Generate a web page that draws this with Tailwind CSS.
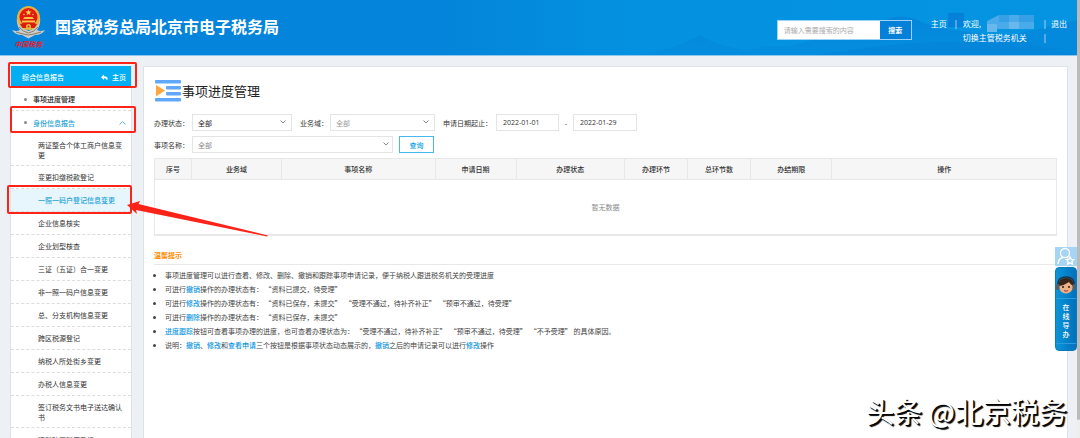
<!DOCTYPE html>
<html lang="zh-CN">
<head>
    <meta charset="UTF-8">
    <meta name="viewport" content="width=device-width, initial-scale=1.0">
    <title>国家税务总局北京市电子税务局</title>
    <script src="https://cdn.jsdelivr.net/npm/@tailwindcss/browser@4"></script>
</head>
<body class="relative h-screen overflow-hidden bg-[#edf1f5] pr-[3px] font-['Noto_Sans_CJK_SC',sans-serif] text-[7px] leading-[10px] text-[#333]">

    <!-- Header -->
    <header class="relative flex h-[56px] items-start border-b border-[#8fc6ee] bg-linear-to-r from-[#0484da] from-40% via-[#0492e0] via-60% to-[#0494e1] pl-[11px] pr-[10px] text-white">
        <svg class="absolute right-0 top-0 h-[55px] w-[640px]" viewBox="0 0 640 55" aria-hidden="true">
            <defs>
                <linearGradient id="hill" x1="0" y1="0" x2="0" y2="1">
                    <stop offset="0" stop-color="#0480d8" stop-opacity=".7"/>
                    <stop offset="1" stop-color="#0480d8" stop-opacity=".25"/>
                </linearGradient>
            </defs>
            <path d="M200 55 Q240 48 263 35 Q280 46 310 50 Q330 44 350 47 Q380 38 420 30 Q460 12 475 18 L500 28 Q560 34 640 55Z" fill="url(#hill)"/>
            <path d="M511 13 h16 v14 h-16z" fill="#0480d8"/>
            <path d="M380 55 Q470 40 540 42 Q600 30 640 20 V55Z" fill="#0480d8" fill-opacity=".5"/>
        </svg>
        <div class="relative flex w-[35px] flex-col items-center pt-[5px]">
            <svg class="h-[34px] w-[35px]" viewBox="0 0 35 34" aria-hidden="true">
                <path d="M1 25 Q6 27 9 25 Q5 20 6 12 Q10 24 17.500 26 Q25 24 29 12 Q30 20 26 25 Q29 27 34 25 Q31 30 24 30 L17.500 33.500 L11 30 Q4 30 1 25Z" fill="#c9cdd0"/>
                <path d="M5 27 Q11 29 17.500 30 Q24 29 30 27 M8 22 Q12 27 17.500 28 Q23 27 27 22" fill="none" stroke="#8b7d5c" stroke-width="1"/>
                <ellipse cx="17.500" cy="13" rx="11.500" ry="12" fill="#e9b23c"/>
                <circle cx="17.500" cy="12" r="9" fill="#e5190f"/>
                <path d="M17.500 4.500 l.9 1.900 2.100.2 -1.600 1.400 .5 2.100 -1.900-1.100 -1.900 1.100 .5-2.100 -1.600-1.400 2.100-.2z" fill="#ffd94a"/>
                <circle cx="13" cy="9.500" r=".8" fill="#ffd94a"/>
                <circle cx="22" cy="9.500" r=".8" fill="#ffd94a"/>
                <path d="M12 14 h11 l-1.500-2 h-8z M11 17.500 h13 v-2 h-13z" fill="#f7c443"/>
                <path d="M9 19 Q17.500 16.500 26 19 L23.500 23 H11.500Z" fill="#d81c10"/>
                <circle cx="17.500" cy="21.500" r="2.500" fill="#f2bd3c"/>
                <circle cx="17.500" cy="21.500" r="1" fill="#d81c10"/>
            </svg>
            <span class="font-bold italic text-[#e0202c]">中国税务</span>
        </div>
        <h1 class="relative ml-[9px] mt-[14px] text-[16px] font-bold leading-[24px]">国家税务总局北京市电子税务局</h1>
        <form class="relative ml-auto mt-[20px] flex h-[20px] w-[135px] border border-[#9bd2f5]">
            <input type="text" aria-label="搜索" placeholder="请输入需要搜索的内容" class="min-w-0 flex-1 bg-white px-[6px] text-[#333] outline-none placeholder:text-[#aaa]">
            <button type="button" class="w-[31px] bg-[#0480d8] font-bold text-white">搜索</button>
        </form>
        <nav class="relative ml-[19px] mt-[17px] flex text-[8px] leading-[14px]">
            <a href="#" class="whitespace-nowrap">主页</a>
            <span class="ml-[8px]">|</span>
            <div class="ml-[6px] w-[81px]">
                <div class="flex h-[14px]">
                    <span>欢迎,</span>
                    <svg class="-mt-[3px] ml-[6px] h-[18px] w-[50px] shrink-0" viewBox="0 0 50 18" aria-hidden="true">
                        <path d="M0 7 L12 1 H47 V15 H10 V18 H0Z" fill="#4aabea"/>
                        <path d="M12 1 H22 V8 H12Z M32 1 H47 V8 H32Z" fill="#369fe5"/>
                        <path d="M0 10 H10 V18 H0Z M22 8 H32 V15 H22Z" fill="#69b8ed"/>
                    </svg>
                </div>
                <a href="#" class="relative block whitespace-nowrap">切换主管税务机关</a>
            </div>
            <div class="flex flex-col">
                <span>|</span>
                <span>|</span>
            </div>
            <a href="#" class="ml-[5px] whitespace-nowrap">退出</a>
        </nav>
    </header>

    <div class="flex items-start gap-[11px] pl-[10px] pr-[9px] pt-[10px]">
        <!-- Sidebar -->
        <aside class="w-[122px] shrink-0 border border-t-0 border-[#dde2e6] bg-white">
            <div class="flex h-[22px] items-center justify-between bg-[#04aef2] pl-[11px] pr-[5px] text-white">
                <span class="font-medium">综合信息报告</span>
                <a href="#" class="flex items-center gap-[4px] font-medium">
                    <svg class="h-[7px] w-[7px]" viewBox="0 0 14 14" fill="currentColor" aria-hidden="true"><path d="M6 1 L0 6.500 L6 12 V8.500 Q11 8 12 13 Q16 5 6 4.500Z"/></svg>
                    主页
                </a>
            </div>
            <ul class="divide-y divide-dashed divide-[#ddd]">
                <li class="flex h-[23px] items-center pl-[13px]">
                    <span class="mr-[6px] h-[3px] w-[3px] rounded-full bg-[#888]"></span>
                    <a href="#" class="font-medium text-[#222]">事项进度管理</a>
                </li>
                <li class="flex h-[23px] items-center pl-[13px] pr-[5px]">
                    <span class="mr-[6px] h-[3px] w-[3px] rounded-full bg-[#888]"></span>
                    <a href="#" class="font-medium text-[#1ba3d6]">身份信息报告</a>
                    <svg class="ml-auto h-[4px] w-[7px]" viewBox="0 0 7 4" fill="none" stroke="#5fbfe2" aria-hidden="true"><path d="M.5 3.500 L3.500 .5 L6.500 3.500"/></svg>
                </li>
            </ul>
            <ul class="divide-y divide-dashed divide-[#ddd] text-[#333]">
                <li class="flex h-[32px] items-center pl-[27px] pr-[3px]"><a href="#">两证整合个体工商户信息变更</a></li>
                <li class="flex h-[23px] items-center pl-[27px]"><a href="#">变更扣缴税款登记</a></li>
                <li class="flex h-[23px] items-center bg-[#e7f5fc] pl-[27px]"><a href="#" class="font-medium text-[#1ba3d6]">一照一码户登记信息变更</a></li>
                <li class="flex h-[23px] items-center pl-[27px]"><a href="#">企业信息核实</a></li>
                <li class="flex h-[23px] items-center pl-[27px]"><a href="#">企业划型核查</a></li>
                <li class="flex h-[23px] items-center pl-[27px]"><a href="#">三证（五证）合一变更</a></li>
                <li class="flex h-[23px] items-center pl-[27px]"><a href="#">非一照一码户信息变更</a></li>
                <li class="flex h-[23px] items-center pl-[27px]"><a href="#">总、分支机构信息变更</a></li>
                <li class="flex h-[23px] items-center pl-[27px]"><a href="#">跨区税源登记</a></li>
                <li class="flex h-[23px] items-center pl-[27px]"><a href="#">纳税人所处街乡变更</a></li>
                <li class="flex h-[23px] items-center pl-[27px]"><a href="#">办税人信息变更</a></li>
                <li class="flex h-[32px] items-center pl-[27px] pr-[3px]"><a href="#">签订税务文书电子送达确认书</a></li>
                <li class="flex h-[23px] items-center pl-[27px]"><a href="#">清税跨区税源登记</a></li>
            </ul>
        </aside>

        <!-- Main panel -->
        <main class="h-[calc(100vh-66px)] min-w-0 flex-1 border border-b-0 border-[#dde2e6] bg-white px-[10px] pt-[12px]">
            <div class="flex items-center gap-px pl-px">
                <svg class="h-[22px] w-[26px]" viewBox="0 0 26 22" aria-hidden="true">
                    <g fill="#5fa8fb">
                        <rect width="26" height="3.500" rx="1"/>
                        <rect x="11" y="6" width="15" height="3.500" rx="1"/>
                        <rect x="11" y="12" width="15" height="3.500" rx="1"/>
                        <rect y="18" width="26" height="3.500" rx="1"/>
                    </g>
                    <path d="M1 5 L10 10.500 L1 16.500Z" fill="#fba83f"/>
                </svg>
                <h2 class="text-[13px] leading-[24px] text-[#222]">事项进度管理</h2>
            </div>

            <form class="mt-[11px] space-y-[5px]">
                <div class="flex h-[17px] items-center">
                    <label for="status" class="w-[38px] whitespace-nowrap">办理状态：</label>
                    <div class="relative h-full w-[100px]">
                        <select id="status" class="block h-full w-full appearance-none border border-[#e4e4e4] bg-white px-[5px] text-[#222]"><option>全部</option></select>
                        <svg class="pointer-events-none absolute right-[6px] top-[6px] h-[4px] w-[6px]" viewBox="0 0 6 4" fill="none" stroke="#888" aria-hidden="true"><path d="M.5 .5 L3 3 L5.500 .5"/></svg>
                    </div>
                    <label for="domain" class="ml-[8px] w-[30px] whitespace-nowrap">业务域：</label>
                    <div class="relative h-full w-[105px]">
                        <select id="domain" class="block h-full w-full appearance-none border border-[#e4e4e4] bg-white px-[5px] text-[#999]"><option>全部</option></select>
                        <svg class="pointer-events-none absolute right-[6px] top-[6px] h-[4px] w-[6px]" viewBox="0 0 6 4" fill="none" stroke="#888" aria-hidden="true"><path d="M.5 .5 L3 3 L5.500 .5"/></svg>
                    </div>
                    <label for="date-from" class="ml-[8px] w-[53px] whitespace-nowrap">申请日期起止：</label>
                    <input type="text" id="date-from" value="2022-01-01" class="h-full w-[63px] border border-[#e4e4e4] px-[6px] font-['Open_Sans','Noto_Sans_CJK_SC',sans-serif] text-[7px]">
                    <span class="w-[14px] text-center">-</span>
                    <input type="text" aria-label="截止日期" value="2022-01-29" class="h-full w-[64px] border border-[#e4e4e4] px-[6px] font-['Open_Sans','Noto_Sans_CJK_SC',sans-serif] text-[7px]">
                </div>
                <div class="flex h-[17px] items-center">
                    <label for="item-name" class="w-[38px] whitespace-nowrap">事项名称：</label>
                    <div class="relative h-full w-[201px]">
                        <select id="item-name" class="block h-full w-full appearance-none border border-[#e4e4e4] bg-white px-[5px] text-[#888]"><option>全部</option></select>
                        <svg class="pointer-events-none absolute right-[4px] top-[6px] h-[4px] w-[6px]" viewBox="0 0 6 4" fill="none" stroke="#888" aria-hidden="true"><path d="M.5 .5 L3 3 L5.500 .5"/></svg>
                    </div>
                    <button type="button" class="ml-[6px] h-full w-[35px] border border-[#45b9ee] bg-white font-medium text-[#0aa0ea]">查询</button>
                </div>
            </form>

            <table class="mt-[5px] w-full table-fixed border-collapse border border-b-2 border-[#e8e8e8]">
                <thead>
                    <tr class="h-[21px] bg-[#f6f6f6]">
                        <th class="w-[37px] border border-[#e8e8e8] font-medium">序号</th>
                        <th class="w-[10%] border border-[#e8e8e8] font-medium">业务域</th>
                        <th class="w-[17%] border border-[#e8e8e8] font-medium">事项名称</th>
                        <th class="w-[9%] border border-[#e8e8e8] font-medium">申请日期</th>
                        <th class="w-[12%] border border-[#e8e8e8] font-medium">办理状态</th>
                        <th class="w-[7%] border border-[#e8e8e8] font-medium">办理环节</th>
                        <th class="w-[7%] border border-[#e8e8e8] font-medium">总环节数</th>
                        <th class="w-[9%] border border-[#e8e8e8] font-medium">办结期限</th>
                        <th class="border border-[#e8e8e8] font-medium">操作</th>
                    </tr>
                </thead>
                <tbody>
                    <tr class="h-[55px]">
                        <td colspan="9" class="text-center text-[#888]">暂无数据</td>
                    </tr>
                </tbody>
            </table>

            <section class="mt-[14px]">
                <h3 class="border-b border-[#e8e8e8] pb-[3px] font-bold leading-[11px] text-[#ff8a00]">温馨提示</h3>
                <ul class="mt-[3px] list-disc pl-[11px] leading-[14px] text-[#444]">
                    <li>事项进度管理可以进行查看、修改、删除、撤销和跟踪事项申请记录，便于纳税人跟进税务机关的受理进度</li>
                    <li>可进行<b class="font-medium text-[#0a95e2]">撤销</b>操作的办理状态有： “资料已提交，待受理”</li>
                    <li>可进行<b class="font-medium text-[#0a95e2]">修改</b>操作的办理状态有： “资料已保存，未提交” &nbsp;“受理不通过，待补齐补正” &nbsp;“预审不通过，待受理”</li>
                    <li>可进行<b class="font-medium text-[#0a95e2]">删除</b>操作的办理状态有： “资料已保存，未提交”</li>
                    <li><b class="font-medium text-[#0a95e2]">进度跟踪</b>按钮可查看事项办理的进度，也可查看办理状态为： “受理不通过，待补齐补正” &nbsp;“预审不通过，待受理” &nbsp;“不予受理” 的具体原因。</li>
                    <li>说明：<b class="font-medium text-[#0a95e2]">撤销</b>、<b class="font-medium text-[#0a95e2]">修改</b>和<b class="font-medium text-[#0a95e2]">查看申请</b>三个按钮是根据事项状态动态展示的，<b class="font-medium text-[#0a95e2]">撤销</b>之后的申请记录可以进行<b class="font-medium text-[#0a95e2]">修改</b>操作</li>
                </ul>
            </section>
        </main>
    </div>

    <!-- Highlight boxes and arrow -->
    <svg class="pointer-events-none absolute left-0 top-0 h-[250px] w-[280px]" viewBox="0 0 280 250" aria-hidden="true">
        <g fill="none" stroke="#fc2318" stroke-width="2">
            <rect x="9" y="63" width="127" height="24" rx="1"/>
            <rect x="11" y="107" width="124" height="25" rx="1"/>
            <rect x="8" y="186" width="123" height="27" rx="1"/>
        </g>
        <path d="M127 205 L140 201 L138.500 204 L268 235.500 L267 236.500 L136 210 L137 214Z" fill="#fc2318"/>
    </svg>

    <!-- Floating help -->
    <div class="absolute right-[3px] top-[247px] w-[22px]">
        <a href="#" aria-label="个人中心" class="block h-[19px] bg-[#a6d4f3]">
            <svg class="h-[19px] w-[22px]" viewBox="0 0 22 19" fill="none" stroke="#fff" stroke-width="1.300" aria-hidden="true">
                <circle cx="10" cy="6" r="4.500"/>
                <path d="M3 17 Q3.500 11 8 10.500 M12 10.500 L13 11"/>
                <path d="M15 10 l1.200 2.300 2.600.3 -1.900 1.800 .5 2.600 -2.400-1.200 -2.400 1.200 .5-2.600 -1.900-1.800 2.600-.3z"/>
            </svg>
        </a>
        <a href="#" class="mt-px flex h-[84px] flex-col items-center rounded-[4px] border border-[#0b79c0] bg-linear-to-r from-[#0b94d9] to-[#0271bb] text-white">
            <svg class="mt-[8px] h-[19px] w-[20px] shrink-0" viewBox="0 0 20 19" aria-hidden="true">
                <path d="M2 10 Q1 1 10 1 Q19 1 18 10" fill="none" stroke="#234" stroke-width="1.500"/>
                <ellipse cx="10" cy="11" rx="7" ry="6.500" fill="#e9b08a"/>
                <path d="M3 10 Q2 2 10 2 Q18 2 17 10 Q14 8 13 6 Q9 9 3 10Z" fill="#3a2418"/>
                <circle cx="7" cy="11" r="1" fill="#2b1a12"/>
                <circle cx="13" cy="11" r="1" fill="#2b1a12"/>
                <path d="M8 14.500 Q10 16 12 14.500" fill="none" stroke="#a03a2a"/>
                <rect y="8" width="3.500" height="6" rx="1.500" fill="#50606e"/>
                <rect x="16.500" y="8" width="3.500" height="6" rx="1.500" fill="#50606e"/>
            </svg>
            <span class="mt-[3px] flex w-full flex-col items-center border-y border-[#2a9cdb] py-[4px] font-medium leading-[9px]">
                <span>在</span><span>线</span><span>导</span><span>办</span>
            </span>
        </a>
    </div>

    <div class="absolute bottom-[9px] right-[13px] whitespace-nowrap text-[28px] leading-[36px] text-white [text-shadow:1px_1px_0_#000,2px_2px_1px_#000]">头条 @北京税务</div>

    <!-- Scrollbar -->
    <div class="absolute right-0 top-0 h-full w-[3px] bg-[#eee]">
        <div class="h-[420px] rounded-b-[2px] bg-[#bbb]"></div>
    </div>
</body>
</html>
